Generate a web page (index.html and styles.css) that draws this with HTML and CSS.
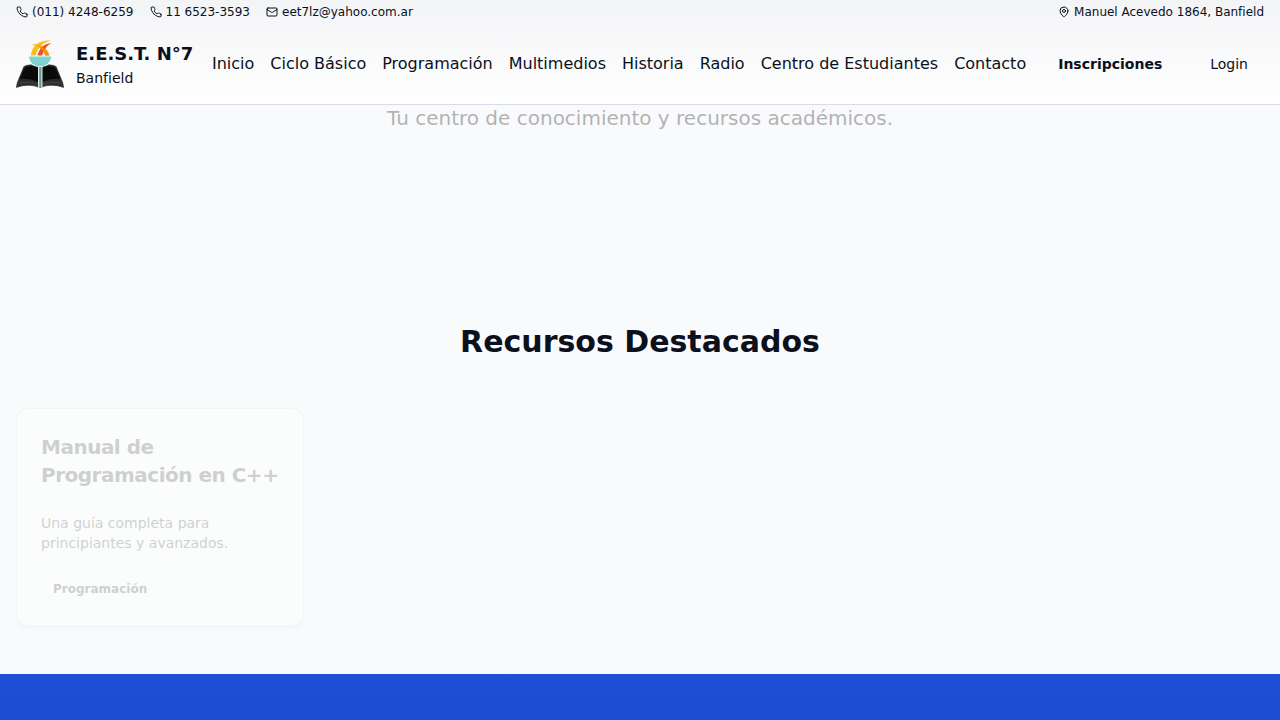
FILE: index.html
```html
<!DOCTYPE html>
<html lang="es">
<head>
<meta charset="utf-8">
<title>E.E.S.T. N°7 Banfield</title>
<link rel="stylesheet" href="styles.css">
</head>
<body>
<header class="header">
  <div class="topbar">
    <div class="contacts">
      <span class="contact"><svg class="icon" viewBox="0 0 24 24"><path d="M22 16.92v3a2 2 0 0 1-2.18 2 19.79 19.79 0 0 1-8.63-3.07 19.5 19.5 0 0 1-6-6 19.79 19.79 0 0 1-3.07-8.67A2 2 0 0 1 4.11 2h3a2 2 0 0 1 2 1.72 12.84 12.84 0 0 0 .7 2.81 2 2 0 0 1-.45 2.11L8.09 9.91a16 16 0 0 0 6 6l1.27-1.27a2 2 0 0 1 2.11-.45 12.84 12.84 0 0 0 2.81.7A2 2 0 0 1 22 16.92z"/></svg>(011) 4248-6259</span>
      <span class="contact"><svg class="icon" viewBox="0 0 24 24"><path d="M22 16.92v3a2 2 0 0 1-2.18 2 19.79 19.79 0 0 1-8.63-3.07 19.5 19.5 0 0 1-6-6 19.79 19.79 0 0 1-3.07-8.67A2 2 0 0 1 4.11 2h3a2 2 0 0 1 2 1.72 12.84 12.84 0 0 0 .7 2.81 2 2 0 0 1-.45 2.11L8.09 9.91a16 16 0 0 0 6 6l1.27-1.27a2 2 0 0 1 2.11-.45 12.84 12.84 0 0 0 2.81.7A2 2 0 0 1 22 16.92z"/></svg>11 6523-3593</span>
      <span class="contact"><svg class="icon" viewBox="0 0 24 24"><rect width="20" height="16" x="2" y="4" rx="2"/><path d="m22 7-8.97 5.7a1.94 1.94 0 0 1-2.06 0L2 7"/></svg>eet7lz@yahoo.com.ar</span>
    </div>
    <span class="contact"><svg class="icon" viewBox="0 0 24 24"><path d="M20 10c0 6-8 12-8 12s-8-6-8-12a8 8 0 0 1 16 0Z"/><circle cx="12" cy="10" r="3"/></svg>Manuel Acevedo 1864, Banfield</span>
  </div>
  <div class="mainbar">
    <a class="brand">
      <svg class="logo" viewBox="0 0 48 48">
        <path fill="#5c5c5c" d="M0 48 .8 43 7.500 26.500Q10 24 16 24.500 21 25 23.500 27V48Q13 43.500 0 48ZM48 48 47.200 43 40.500 26.500Q38 24 32 24.500 27 25 24.500 27V48Q35 43.500 48 48Z"/>
        <path fill="#2c2c2c" d="M.4 47 1.200 43 8 26.500Q17 23 22.500 27V46.500Q12 43.500 .4 47ZM47.600 47 46.800 43 40 26.500Q31 23 25.500 27V46.500Q36 43.500 47.600 47Z"/>
        <path fill="#0a0a0a" d="M3.500 39 9 27.500Q17 24.500 22 28V42Q13 38 3.500 39ZM44.500 39 39 27.500Q31 24.500 26 28V42Q35 38 44.500 39Z"/>
        <path fill="none" stroke="#555" stroke-width=".6" d="M1.500 43.500Q12 40.500 22.500 44.500M46.500 43.500Q36 40.500 25.500 44.500"/>
        <path fill="#dce8e6" d="M22 25h4.500v23H22z"/>
        <path fill="#609b98" d="M23.200 25h2.200v23h-2.200z"/>
        <path fill="#fff" d="M12 16h24q-1 11-12 11T12 16Z"/>
        <path fill="#7dd3d0" d="M12.700 16.500h22.800Q33.500 26.300 24 26.300T12.700 16.500Z"/>
        <path fill="#fcbd17" d="M14.900 15.500C16 8 20 0 35.500.4 28 1.700 21.500 7 19.800 15.500Z"/>
        <path fill="#f9b31a" d="M15.700 4.700C23 2.800 31.800 7 33.500 15.500H29C27 10 23 6 15.700 4.700Z"/>
        <path fill="#e9561e" d="M21.500 15.500C23 9 27.500 3.300 35.500 3.200 30 6 27.500 10 26.300 15.500Z"/>
        <path fill="#f68b1f" d="M22.500 6Q30.500 8 33.300 15.500H29.300Q27.500 9.500 22.500 6Z"/>
      </svg>
      <span class="brand-text"><strong class="brand-name">E.E.S.T. N°7</strong><span class="brand-city">Banfield</span></span>
    </a>
    <nav class="nav">
      <a>Inicio</a><a>Ciclo Básico</a><a>Programación</a><a>Multimedios</a><a>Historia</a><a>Radio</a><a>Centro de Estudiantes</a><a>Contacto</a>
      <a class="button button-strong">Inscripciones</a><a class="button">Login</a>
    </nav>
  </div>
</header>
<main class="main">
  <p class="tagline">Tu centro de conocimiento y recursos académicos.</p>
  <section class="resources">
    <h2 class="section-title">Recursos Destacados</h2>
    <div class="grid">
      <article class="card">
        <div class="card-body">
          <h3 class="card-title">Manual de Programación en C++</h3>
          <p class="card-text">Una guía completa para principiantes y avanzados.</p>
          <span class="badge">Programación</span>
        </div>
      </article>
    </div>
  </section>
</main>
<footer class="footer"></footer>
</body>
</html>
```
FILE: styles.css
```css
* { box-sizing: border-box; margin: 0; padding: 0; }
body {
  height: 720px;
  display: flex;
  flex-direction: column;
  background: #f9fafc;
  color: #0a101c;
  font: 16px/24px "DejaVu Sans", sans-serif;
}
.header {
  flex: none;
  height: 105px;
  border-bottom: 1px solid #d8dce8;
  background: linear-gradient(#f3f4f6, #fff);
}
.topbar, .contacts, .contact, .mainbar, .brand, .nav { display: flex; align-items: center; }
.topbar { justify-content: space-between; height: 24px; padding: 0 16px; font-size: 12px; line-height: 16px; }
.contacts { gap: 16px; }
.contact { gap: 4px; }
.icon { width: 12px; height: 12px; fill: none; stroke: currentColor; stroke-width: 2; stroke-linecap: round; stroke-linejoin: round; }
.mainbar { justify-content: space-between; height: 80px; padding: 0 16px; white-space: nowrap; }
.brand { gap: 12px; }
.logo { width: 48px; height: 48px; }
.brand-text { display: flex; flex-direction: column; }
.brand-name { font-size: 18px; line-height: 28px; }
.brand-city { font-size: 14px; line-height: 20px; }
.nav { gap: 16px; }
.button { padding: 0 16px; font-size: 14px; }
.button-strong { font-weight: 700; }
.main { flex: none; height: 569px; }
.tagline { margin-top: -1px; color: #0c0c0c; font-size: 20px; line-height: 28px; text-align: center; opacity: .3; }
.resources { padding: 192px 16px 0; }
.section-title { font-size: 30px; line-height: 36px; text-align: center; }
.grid { display: grid; grid-template-columns: repeat(4, 1fr); gap: 32px; margin-top: 48px; }
.card {
  padding: 24px;
  border: 1px solid #f3f4f8;
  border-radius: 12px;
  background: #fbfdfc;
  box-shadow: 0 4px 6px -1px #00000005, 0 2px 4px -2px #00000005;
}
.card-body { color: #101010; opacity: .19; }
.card-title { font-size: 20px; line-height: 28px; letter-spacing: -.5px; }
.card-text { margin-top: 24px; font-size: 14px; line-height: 20px; }
.badge { display: block; width: max-content; margin-top: 24px; padding: 4px 12px; font-size: 12px; line-height: 16px; font-weight: 700; }
.footer { flex: none; height: 46px; background: linear-gradient(#1d4fd9, #1c4ccf); }
```
